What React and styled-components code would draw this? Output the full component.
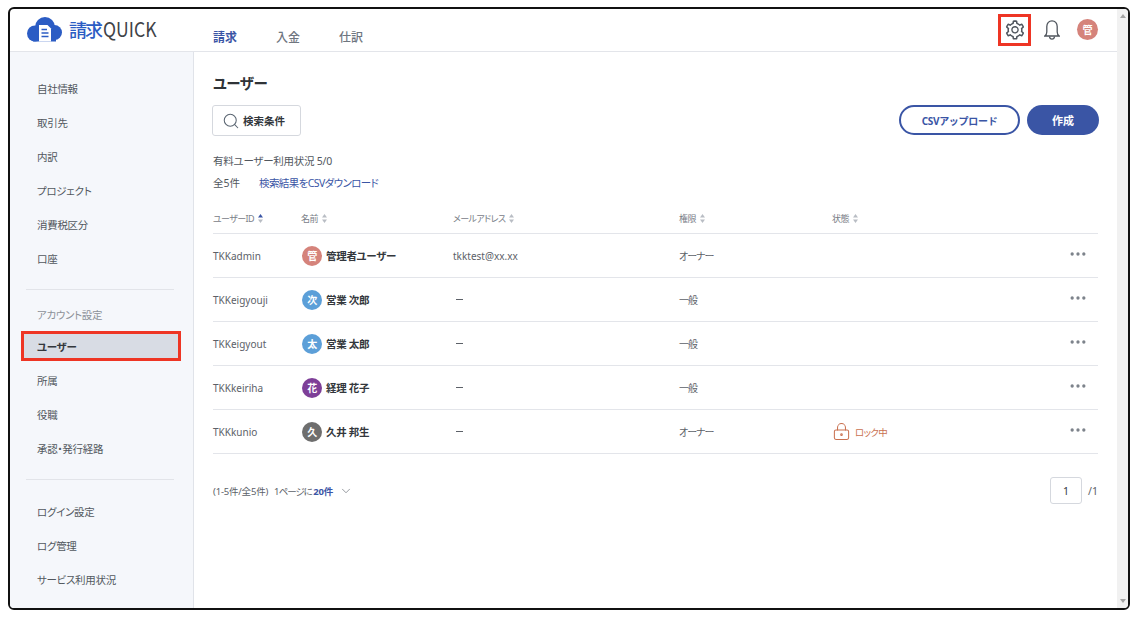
import styled, { createGlobalStyle } from "styled-components";
import { Search, ChevronDown, LockKeyhole, MoreHorizontal } from "lucide-react";
import { AiOutlineSetting } from "react-icons/ai";

const GlobalStyle = createGlobalStyle`
  html, body {
    margin: 0;
    height: 100%;
    background: #fff;
    overflow: hidden;
  }
  * { box-sizing: border-box; }
  body {
    font-family: "Noto Sans", "Noto Sans CJK JP", sans-serif;
    font-feature-settings: "palt";
    color: #3d4248;
  }
`;

const topMenu = [
  { label: "自社情報" },
  { label: "取引先" },
  { label: "内訳" },
  { label: "プロジェクト" },
  { label: "消費税区分" },
  { label: "口座" },
];
const accountMenu = [
  { label: "ユーザー", active: true },
  { label: "所属" },
  { label: "役職" },
  { label: "承認・発行経路" },
];
const bottomMenu = [
  { label: "ログイン設定" },
  { label: "ログ管理" },
  { label: "サービス利用状況" },
];

const users = [
  { id: "TKKadmin", icon: "管", color: "#d5837b", name: "管理者ユーザー", mail: "tkktest@xx.xx", role: "オーナー" },
  { id: "TKKeigyouji", icon: "次", color: "#5c9fd8", name: "営業 次郎", role: "一般" },
  { id: "TKKeigyout", icon: "太", color: "#5c9fd8", name: "営業 太郎", role: "一般" },
  { id: "TKKkeiriha", icon: "花", color: "#7e3f98", name: "経理 花子", role: "一般" },
  { id: "TKKkunio", icon: "久", color: "#6e6e6e", name: "久井 邦生", role: "オーナー", locked: true },
];

function SortMark({ on }) {
  return (
    <svg width="5" height="9" viewBox="0 0 5 9">
      <path d="M2.5 0 5 3.6H0z" fill={on ? "#3a55a5" : "#b9bdc4"} />
      <path d="M2.5 9 0 5.4h5z" fill="#b9bdc4" />
    </svg>
  );
}

function CloudLogo() {
  return (
    <svg width="35" height="25" viewBox="0 0 35 25">
      <g fill="#2b5cc4">
        <circle cx="8" cy="16.5" r="8" />
        <circle cx="18" cy="10" r="10" />
        <circle cx="27.5" cy="15.5" r="7.5" />
        <rect x="6" y="14" width="23" height="10.5" />
      </g>
      <path d="M12 8h8.5l3.5 3.500v13H12z" fill="#fff" />
      <path d="M14.500 12.500h5.500M14.500 16h7M14.500 19.500h7" stroke="#2b5cc4" strokeWidth="1.5" />
    </svg>
  );
}

function BellIcon() {
  return (
    <svg width="16" height="20" viewBox="0 0 16 20" fill="none" stroke="#50565e" strokeWidth="1.3">
      <path d="M.8 16h14.4c-1.300-1-2-2.200-2-4V6.600C13.200 3.200 11 .8 8 .8S2.800 3.200 2.800 6.600V12c0 1.800-.7 3-2 4z" />
      <path d="M5.500 16.500c.2 1.700 1.200 2.600 2.500 2.600s2.300-.9 2.500-2.600" />
    </svg>
  );
}

export default function App() {
  return (
    <>
      <GlobalStyle />
      <Frame>
        <Page>
          <Header>
            <Logo>
              <CloudLogo />
              <LogoText>
                <b>請求</b>
                <span>QUICK</span>
              </LogoText>
            </Logo>
            <Tabs>
              <Tab $active>請求</Tab>
              <Tab>入金</Tab>
              <Tab>仕訳</Tab>
            </Tabs>
            <HeaderIcons>
              <Marked>
                <AiOutlineSetting size={22} color="#50565e" />
              </Marked>
              <BellIcon />
              <Avatar $color="#d5837b" $big>管</Avatar>
            </HeaderIcons>
          </Header>
          <Body>
            <Sidebar>
              <MenuGroup>
                {topMenu.map((m) => (
                  <MenuItem key={m.label}>{m.label}</MenuItem>
                ))}
              </MenuGroup>
              <Divider />
              <MenuHeading>アカウント設定</MenuHeading>
              <MenuGroup>
                {accountMenu.map((m) => (
                  <MenuItem key={m.label} $active={m.active}>
                    {m.label}
                  </MenuItem>
                ))}
              </MenuGroup>
              <Divider />
              <MenuGroup>
                {bottomMenu.map((m) => (
                  <MenuItem key={m.label}>{m.label}</MenuItem>
                ))}
              </MenuGroup>
            </Sidebar>
            <Content>
              <Title>ユーザー</Title>
              <Toolbar>
                <SearchButton>
                  <Search size={18} strokeWidth={1.4} color="#5b6672" />
                  検索条件
                </SearchButton>
                <Actions>
                  <OutlineButton>CSVアップロード</OutlineButton>
                  <PrimaryButton>作成</PrimaryButton>
                </Actions>
              </Toolbar>
              <Usage>有料ユーザー利用状況 5/0</Usage>
              <Count>
                全5件
                <DownloadLink>検索結果をCSVダウンロード</DownloadLink>
              </Count>
              <Table>
                <HeadRow>
                  <HeadCell>ユーザーID <SortMark on /></HeadCell>
                  <HeadCell>名前 <SortMark /></HeadCell>
                  <HeadCell>メールアドレス <SortMark /></HeadCell>
                  <HeadCell>権限 <SortMark /></HeadCell>
                  <HeadCell>状態 <SortMark /></HeadCell>
                </HeadRow>
                {users.map((u) => (
                  <Row key={u.id}>
                    <span>{u.id}</span>
                    <NameCell>
                      <Avatar $color={u.color}>{u.icon}</Avatar>
                      {u.name}
                    </NameCell>
                    {u.mail ? <span>{u.mail}</span> : <EmptyMail />}
                    <RoleCell>{u.role}</RoleCell>
                    <span>
                      {u.locked && (
                        <LockState>
                          <LockKeyhole size={19} strokeWidth={1.3} />
                          ロック中
                        </LockState>
                      )}
                    </span>
                    <More>
                      <MoreHorizontal size={20} strokeWidth={2} />
                    </More>
                  </Row>
                ))}
              </Table>
              <Pager>
                <PagerInfo>
                  (1-5件/全5件)
                  <PerPage>
                    1ページに <b>20件</b>
                  </PerPage>
                  <ChevronDown size={14} strokeWidth={1.2} color="#6a7078" />
                </PagerInfo>
                <PagerRight>
                  <PageBox>1</PageBox>
                  /1
                </PagerRight>
              </Pager>
            </Content>
          </Body>
        </Page>
        <Scrollbar>
          <Arrow />
          <Arrow $down />
        </Scrollbar>
      </Frame>
    </>
  );
}

const Frame = styled.div`
  display: flex;
  width: 1122px;
  height: 603px;
  margin: 7px 0 0 8px;
  border: 2px solid #111;
  border-radius: 6px;
  overflow: hidden;
  background: #fff;
`;

const Page = styled.div`
  flex: 1;
  min-width: 0;
  display: flex;
  flex-direction: column;
`;

const Header = styled.header`
  flex: none;
  height: 43px;
  display: flex;
  align-items: center;
  padding-left: 17px;
  border-bottom: 1px solid #e3e5ea;
`;

const Logo = styled.div`
  display: flex;
  align-items: center;
  gap: 7px;
  width: 186px;
  margin-top: -2px;
`;

const LogoText = styled.div`
  display: flex;
  align-items: center;
  font-size: 20px;
  line-height: 24px;
  color: #3f4347;
  font-family: "Noto Sans CJK JP", sans-serif;
  font-feature-settings: normal;
  b {
    font-size: 18px;
    font-weight: 500;
    letter-spacing: -2px;
    margin-right: 2px;
    color: #2b5cc4;
  }
  span {
    transform: scaleX(0.88);
    transform-origin: left center;
  }
`;

const Tabs = styled.nav`
  display: flex;
  gap: 39px;
  margin-top: 12px;
`;

const Tab = styled.div`
  font-family: "Noto Sans CJK JP", sans-serif;
  font-size: 12px;
  font-weight: ${(p) => (p.$active ? 700 : 500)};
  color: ${(p) => (p.$active ? "#3a55a5" : "#6f767f")};
`;

const HeaderIcons = styled.div`
  margin-left: auto;
  margin-right: 19px;
  margin-top: -1px;
  display: flex;
  align-items: center;
  gap: 13px;
`;

const Marked = styled.div`
  width: 33px;
  height: 32px;
  display: flex;
  align-items: center;
  justify-content: center;
  border: 3px solid #ee3524;
`;

const Avatar = styled.div`
  flex: none;
  width: ${(p) => (p.$big ? 21 : 20)}px;
  height: ${(p) => (p.$big ? 21 : 20)}px;
  margin-left: ${(p) => (p.$big ? 4 : 0)}px;
  border-radius: 50%;
  background: ${(p) => p.$color};
  color: #fff;
  font-family: "Noto Sans CJK JP", sans-serif;
  font-size: 10px;
  font-weight: 700;
  display: flex;
  align-items: center;
  justify-content: center;
`;

const Body = styled.div`
  flex: 1;
  min-height: 0;
  display: flex;
`;

const Sidebar = styled.aside`
  flex: none;
  width: 184px;
  padding: 21px 12px 0 11px;
  background: #f5f7fb;
  border-right: 1px solid #e0e3e9;
`;

const MenuGroup = styled.div`
  display: flex;
  flex-direction: column;
  gap: 4px;
`;

const MenuItem = styled.div`
  height: 30px;
  display: flex;
  align-items: center;
  padding-left: 16px;
  font-size: 10.5px;
  letter-spacing: -0.3px;
  color: #52575e;
  ${(p) =>
    p.$active &&
    `
    font-weight: 700;
    color: #33373c;
    background: #d8dce4;
    outline: 3px solid #ee3524;
    outline-offset: -3px;
  `}
`;

const Divider = styled.hr`
  margin: 16px 7px 16px 5px;
  border: 0;
  border-top: 1px solid #e2e4e9;
`;

const MenuHeading = styled.div`
  padding-left: 16px;
  height: 19px;
  line-height: 19px;
  margin-bottom: 6px;
  font-size: 10.5px;
  letter-spacing: -0.3px;
  color: #8c9198;
`;

const Content = styled.main`
  flex: 1;
  min-width: 0;
  padding: 20px 19px 0 19px;
`;

const Title = styled.h1`
  margin: 0;
  height: 22px;
  line-height: 22px;
  font-size: 14.5px;
  font-weight: 700;
  letter-spacing: -0.5px;
  color: #2f3337;
`;

const Toolbar = styled.div`
  margin-top: 11px;
  display: flex;
  justify-content: space-between;
  align-items: flex-start;
`;

const SearchButton = styled.button`
  width: 89px;
  height: 31px;
  margin-left: -1px;
  padding: 0 0 0 9px;
  display: flex;
  align-items: center;
  gap: 3px;
  background: #fff;
  border: 1px solid #d5d8de;
  border-radius: 3px;
  font: 700 10.5px "Noto Sans", "Noto Sans CJK JP", sans-serif;
  color: #33373c;
`;

const Actions = styled.div`
  display: flex;
  gap: 7px;
  margin-right: -1px;
`;

const OutlineButton = styled.button`
  width: 121px;
  height: 30px;
  background: #fff;
  border: 2px solid #3a55a5;
  border-radius: 15px;
  font: 700 10px "Noto Sans", "Noto Sans CJK JP", sans-serif;
  letter-spacing: -0.3px;
  color: #3a55a5;
`;

const PrimaryButton = styled.button`
  width: 72px;
  height: 30px;
  background: #3a55a5;
  border: 0;
  border-radius: 15px;
  font: 700 11px "Noto Sans", "Noto Sans CJK JP", sans-serif;
  color: #fff;
`;

const Usage = styled.div`
  margin-top: 17px;
  height: 16px;
  line-height: 16px;
  font-size: 10.5px;
  letter-spacing: -0.25px;
  color: #52575e;
`;

const Count = styled.div`
  margin-top: 6px;
  height: 16px;
  line-height: 16px;
  font-size: 10.5px;
  color: #52575e;
`;

const DownloadLink = styled.a`
  margin-left: 19px;
  letter-spacing: -0.6px;
  color: #3a55a5;
`;

const Table = styled.div`
  margin-top: 16px;
`;

const columns = "88px 152px 226px 153px 1fr 30px";

const HeadRow = styled.div`
  display: grid;
  grid-template-columns: ${columns};
  align-items: center;
  height: 27px;
  padding-bottom: 4px;
  border-bottom: 1px solid #e3e5ea;
  font-size: 9px;
  letter-spacing: -0.6px;
  color: #7a8088;
`;

const HeadCell = styled.span`
  display: flex;
  align-items: center;
  gap: 4px;
`;

const Row = styled.div`
  display: grid;
  grid-template-columns: ${columns};
  align-items: center;
  height: 44px;
  border-bottom: 1px solid #e3e5ea;
  font-size: 10px;
  color: #5c6168;
`;

const NameCell = styled.div`
  display: flex;
  align-items: center;
  gap: 4px;
  font-size: 10.5px;
  font-weight: 700;
  letter-spacing: -0.3px;
  color: #33373c;
  margin-left: 1px;
`;

const EmptyMail = styled.span`
  width: 7px;
  height: 1px;
  margin-left: 3px;
  background: #5c6168;
`;

const RoleCell = styled.span`
  letter-spacing: -1px;
`;

const LockState = styled.div`
  display: flex;
  align-items: center;
  gap: 4px;
  color: #c9704f;
  font-size: 9.5px;
  letter-spacing: -0.7px;
`;

const More = styled.div`
  display: flex;
  color: #7d838b;
  margin-top: -3px;
`;

const Pager = styled.div`
  margin-top: 23px;
  display: flex;
  justify-content: space-between;
  align-items: center;
`;

const PagerInfo = styled.div`
  display: flex;
  align-items: center;
  gap: 6px;
  font-size: 9.5px;
  letter-spacing: -0.2px;
  color: #5c6168;
`;

const PerPage = styled.span`
  letter-spacing: -1px;
  b {
    letter-spacing: -0.2px;
    color: #3a55a5;
  }
`;

const PagerRight = styled.div`
  display: flex;
  align-items: center;
  gap: 6px;
  font-size: 10.5px;
  color: #5c6168;
`;

const PageBox = styled.div`
  width: 32px;
  height: 27px;
  display: flex;
  align-items: center;
  justify-content: center;
  border: 1px solid #d5d8de;
  border-radius: 3px;
  color: #33373c;
`;

const Scrollbar = styled.div`
  flex: none;
  width: 11px;
  background: #f1f1f1;
  display: flex;
  flex-direction: column;
  justify-content: space-between;
  align-items: center;
  padding: 5px 0;
`;

const Arrow = styled.div`
  width: 0;
  height: 0;
  border-left: 3px solid transparent;
  border-right: 3px solid transparent;
  ${(p) => (p.$down ? "border-top: 4px solid #a3a3a3;" : "border-bottom: 4px solid #a3a3a3;")}
`;
